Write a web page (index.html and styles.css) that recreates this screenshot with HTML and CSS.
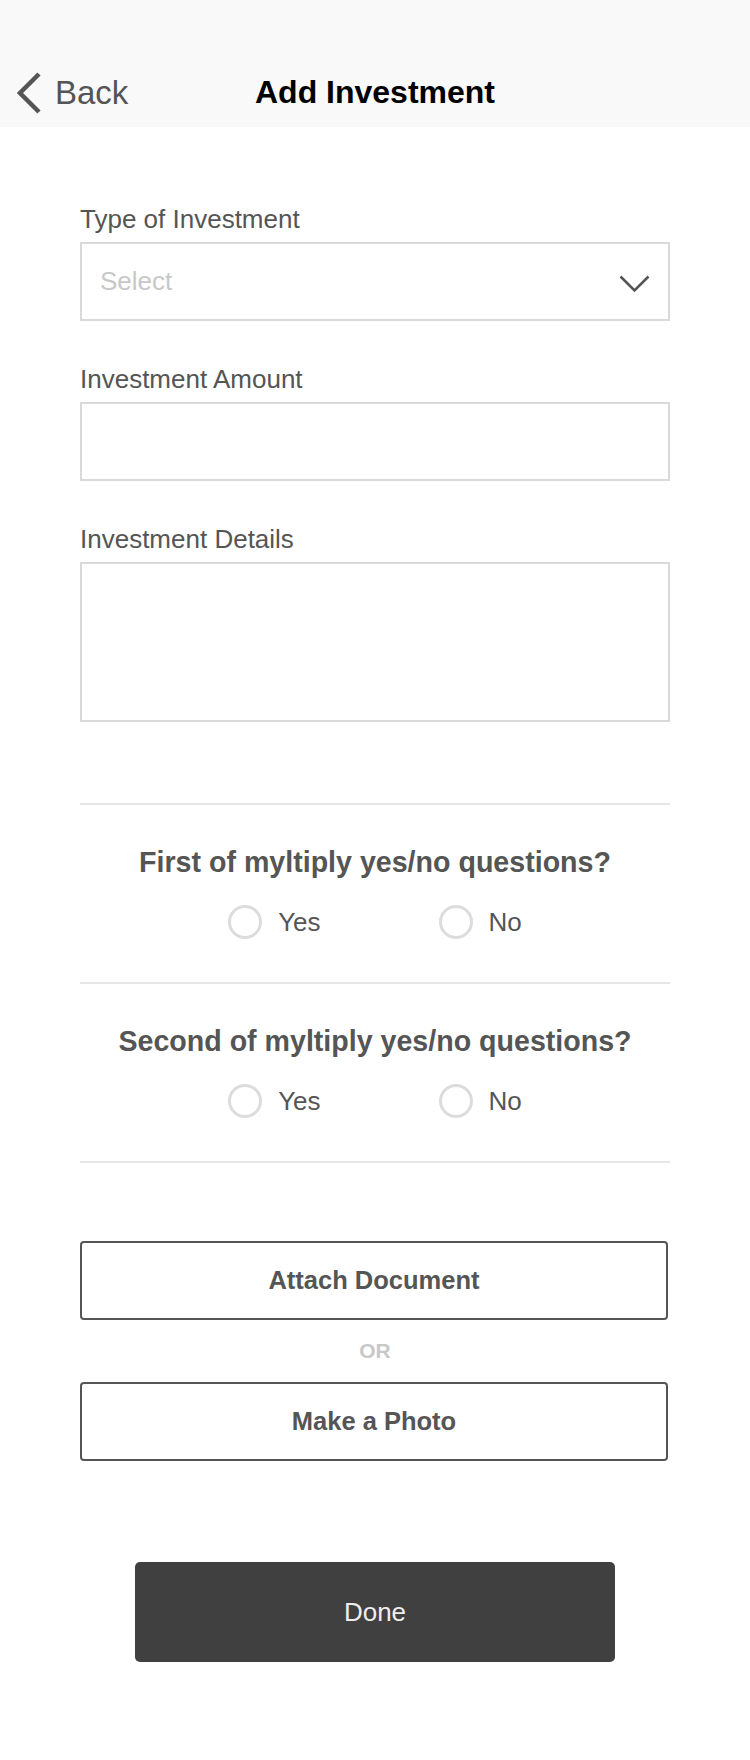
FILE: index.html
```html
<!DOCTYPE html>
<html lang="en">
<head>
<meta charset="utf-8">
<title>Add Investment</title>
<link rel="stylesheet" href="styles.css">
</head>
<body>
<header class="navbar">
  <a class="back" href="#">
    <svg class="back-icon" width="26" height="42" viewBox="0 0 26 42"><path d="M23 2 L4 21 L23 40" fill="none" stroke="#555" stroke-width="4.5"/></svg>
    <span>Back</span>
  </a>
  <h1 class="title">Add Investment</h1>
  <span></span>
</header>

<main class="page">
  <div class="field">
    <label class="field-label">Type of Investment</label>
    <div class="box select">
      <span class="placeholder">Select</span>
      <svg class="select-icon" width="31" height="18" viewBox="0 0 31 18"><path d="M1.5 1.5 L15.5 15.5 L29.5 1.5" fill="none" stroke="#555" stroke-width="2.6"/></svg>
    </div>
  </div>
  <div class="field">
    <label class="field-label">Investment Amount</label>
    <input class="box input" type="text">
  </div>
  <div class="field">
    <label class="field-label">Investment Details</label>
    <textarea class="box textarea"></textarea>
  </div>

  <section class="questions">
    <div class="question">
      <h2 class="question-text">First of myltiply yes/no questions?</h2>
      <div class="options">
        <span class="option"><span class="radio"></span>Yes</span>
        <span class="option"><span class="radio"></span>No</span>
      </div>
    </div>
    <div class="question">
      <h2 class="question-text">Second of myltiply yes/no questions?</h2>
      <div class="options">
        <span class="option"><span class="radio"></span>Yes</span>
        <span class="option"><span class="radio"></span>No</span>
      </div>
    </div>
  </section>

  <div class="attach">
    <button class="outline-btn" type="button">Attach Document</button>
    <div class="or">OR</div>
    <button class="outline-btn" type="button">Make a Photo</button>
  </div>

  <button class="done-btn" type="button">Done</button>
</main>
</body>
</html>
```
FILE: styles.css
```css
* { box-sizing: border-box; }

body {
  margin: 0;
  background: #fff;
  font-family: "Liberation Sans", Arial, Helvetica, sans-serif;
  color: #555;
}

.navbar {
  height: 127px;
  padding-top: 58px;
  background: #f9f9f9;
  display: grid;
  grid-template-columns: 1fr auto 1fr;
  align-items: center;
}

.back {
  display: flex;
  align-items: center;
  gap: 13px;
  padding-left: 16px;
  color: #555;
  text-decoration: none;
  font-size: 33px;
}

.back-icon { display: block; }

.title {
  margin: 0;
  font-size: 32px;
  font-weight: bold;
  color: #000;
}

.page {
  padding: 77px 80px 0;
}

.field { margin-bottom: 43px; }
.field:last-of-type { margin-bottom: 0; }

.field-label {
  display: block;
  font-size: 26px;
  line-height: 30px;
  margin-bottom: 8px;
  color: #555;
}

.box {
  display: block;
  width: 100%;
  height: 79px;
  border: 2px solid #d9d9d9;
  border-radius: 0;
  background: #fff;
  margin: 0;
  font: inherit;
  outline: none;
}

.select {
  display: flex;
  align-items: center;
  justify-content: space-between;
  padding: 0 18px 0 18px;
}

.placeholder {
  font-size: 26px;
  color: #c8c8c8;
}

.select-icon { display: block; margin-top: 4px; }

.textarea {
  height: 160px;
  resize: none;
}

.questions {
  margin-top: 81px;
  border-bottom: 2px solid #e6e6e6;
}

.question {
  border-top: 2px solid #e6e6e6;
  padding: 40px 0 43px;
  text-align: center;
}

.question-text {
  margin: 0;
  font-size: 28.6px;
  line-height: 34px;
  font-weight: bold;
  color: #555;
}

.options {
  margin-top: 26px;
  display: flex;
  justify-content: center;
  gap: 118px;
}

.option {
  display: flex;
  align-items: center;
  gap: 16px;
  font-size: 26px;
  line-height: 34px;
  color: #555;
}

.radio {
  width: 34px;
  height: 34px;
  border: 3px solid #dcdcdc;
  border-radius: 50%;
}

.attach {
  margin-top: 78px;
}

.outline-btn {
  display: block;
  width: 588px;
  height: 79px;
  border: 2px solid #555;
  border-radius: 4px;
  background: #fff;
  font-family: inherit;
  font-size: 25.5px;
  font-weight: bold;
  color: #555;
  padding: 0;
}

.or {
  height: 62px;
  line-height: 62px;
  text-align: center;
  font-size: 21px;
  font-weight: bold;
  color: #c8c8c8;
}

.done-btn {
  display: block;
  width: 480px;
  height: 100px;
  margin: 101px auto 0;
  border: none;
  border-radius: 5px;
  background: #404040;
  color: #eee;
  font-family: inherit;
  font-size: 26px;
  padding: 0;
}
```
